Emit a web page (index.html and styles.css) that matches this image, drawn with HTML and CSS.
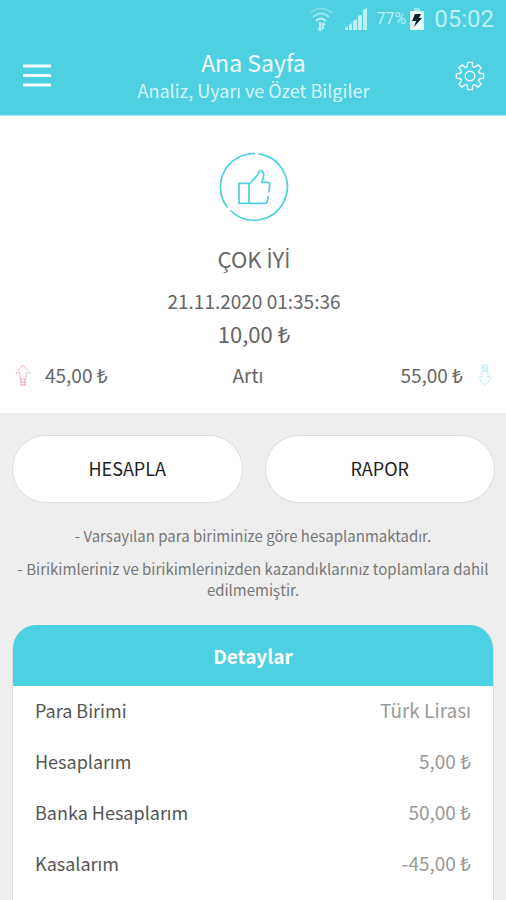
FILE: index.html
```html
<!DOCTYPE html>
<html lang="tr">
<head>
<meta charset="utf-8">
<meta name="viewport" content="width=device-width, initial-scale=1">
<title>Ana Sayfa</title>
<link rel="stylesheet" href="styles.css">
</head>
<body>
<header class="top">
  <div class="status">
    <svg class="wifi" viewBox="0 0 24 26" width="24" height="26" aria-hidden="true">
      <g fill="none" stroke="currentColor" stroke-width="2">
        <path d="M1 7Q12-2 23 7" opacity=".4"/>
        <path d="M4 11Q12 4 20 11" opacity=".7"/>
        <path d="M7 15Q12 10 17 15"/>
      </g>
      <path d="M10 16h2v6h2l-3 4-3-4h2zM13 23v-4h-1l2-3 3 3h-2v4z" fill="currentColor"/>
    </svg>
    <svg class="signal" viewBox="0 0 22 22" width="22" height="22" aria-hidden="true">
      <path d="M0 22v-2l3-2v4zM4 22v-5l3-2v7zM8 22v-9l4-2v11zM13 22V8l4-2v16zM18 22V2l4-2v22z" fill="currentColor"/>
    </svg>
    <span class="battery-text">77%</span>
    <svg class="battery" viewBox="0 0 14 22" width="14" height="22" aria-hidden="true">
      <path d="M4 0h6v3H4z" fill="currentColor" opacity=".5"/>
      <path d="M0 3h14v19H0z" fill="currentColor"/>
      <path d="M5 6h6l-2 4h3L4 19l2-6H2z" fill="#123"/>
    </svg>
    <span class="clock">05:02</span>
  </div>
  <div class="bar">
    <button class="icon-button" type="button" aria-label="Menü">
      <svg viewBox="0 0 28 28" width="28" height="28"><path d="M0 4h28M0 13.500h28M0 23h28" stroke="currentColor" stroke-width="3"/></svg>
    </button>
    <div class="titles">
      <h1>Ana Sayfa</h1>
      <p>Analiz, Uyarı ve Özet Bilgiler</p>
    </div>
    <button class="icon-button" type="button" aria-label="Ayarlar">
      <svg viewBox="-15 -15 30 30" width="30" height="30" fill="none" stroke="currentColor" stroke-width="1.400" stroke-linejoin="round">
        <path d="M-2.800-9.500L-2.200-13.600H2.200L2.800-9.500Q4 -8.200 5.200-8.800L8-11.200 11.200-8 8.800-5.200Q8.200-4 9.500-2.800L13.600-2.200V2.200L9.500 2.800Q8.200 4 8.800 5.200L11.200 8 8 11.200 5.200 8.800Q4 8.200 2.800 9.500L2.200 13.600H-2.200L-2.800 9.500Q-4 8.200-5.200 8.800L-8 11.200-11.200 8-8.800 5.200Q-8.200 4-9.500 2.800L-13.600 2.200V-2.200L-9.500-2.800Q-8.200-4-8.800-5.200L-11.200-8-8-11.200-5.200-8.800Q-4-8.200-2.800-9.500z"/>
        <circle r="4.800"/>
      </svg>
    </button>
  </div>
</header>
<main>
  <section class="summary">
    <svg class="thumb" viewBox="0 0 70 70" width="70" height="70" fill="none" stroke="currentColor" stroke-width="1.700" stroke-linejoin="round" aria-hidden="true">
      <path d="M39.500 1.900A33.300 33.300 0 1 1 11.500 58.500M8.500 55.500A33.300 33.300 0 0 1 36 1.700"/>
      <path d="M20 31.300H30V51.300H20zM30 32.500L38 23.500Q39 22 40 19.800Q41.500 17.500 43.500 19.300Q45.300 21 44.500 24.500L43 30.300H48.500Q51 30.500 50.700 33L50 40.300M49 44L48.500 48.500Q48.200 51.300 45.700 51.300H30"/>
    </svg>
    <h2>ÇOK <span class="dotted">İ</span>Y<span class="dotted">İ</span></h2>
    <p class="date">21.11.2020 01:35:36</p>
    <p class="total">10,00 ₺</p>
    <div class="flow">
      <span class="amount">
        <svg class="up" viewBox="0 0 16 22" width="16" height="22" fill="none" stroke="currentColor" aria-hidden="true"><path d="M5 14V9H1L8 1l7 8h-4v5" stroke-dasharray="3 1"/><path d="M5 15h6M5 18h6M5 21h6M6 15v6M10 15v6"/></svg>
        45,00 ₺
      </span>
      <span class="state">Artı</span>
      <span class="amount end">
        55,00 ₺
        <svg class="down" viewBox="0 0 16 22" width="16" height="22" fill="none" stroke="currentColor" aria-hidden="true"><path d="M5 8v5H1l7 8 7-8h-4V8" stroke-dasharray="3 1"/><path d="M5 7h6M5 4h6M6 1h4M6 1v6M10 1v6"/></svg>
      </span>
    </div>
  </section>
  <div class="actions">
    <button type="button">HESAPLA</button>
    <button type="button">RAPOR</button>
  </div>
  <div class="notes">
    <p>- Varsayılan para biriminize göre hesaplanmaktadır.</p>
    <p>- Birikimleriniz ve birikimlerinizden kazandıklarınız toplamlara dahil edilmemiştir.</p>
  </div>
  <section class="card">
    <h2>Detaylar</h2>
    <table>
      <tbody>
        <tr><th scope="row">Para Birimi</th><td>Türk Lirası</td></tr>
        <tr><th scope="row">Hesaplarım</th><td>5,00 ₺</td></tr>
        <tr><th scope="row">Banka Hesaplarım</th><td>50,00 ₺</td></tr>
        <tr><th scope="row">Kasalarım</th><td>-45,00 ₺</td></tr>
      </tbody>
    </table>
  </section>
</main>
</body>
</html>
```
FILE: styles.css
```css
* { box-sizing: border-box; }
body {
  margin: 0;
  background: #eee;
  color: #666;
  font-family: "Noto Sans CJK SC", "Noto Sans", sans-serif;
  font-size: 18px;
  line-height: 24px;
}
h1, h2, p { margin: 0; font-weight: 400; }
button { font: inherit; cursor: pointer; }
svg { display: block; flex: none; }

.top {
  background: #4dd0e2;
  color: #f2fdff;
  border-bottom: 1px solid #a6e7f0;
}
.status {
  display: flex;
  align-items: center;
  justify-content: flex-end;
  height: 38px;
  padding-right: 12px;
  color: #bdeff5;
  font-family: Roboto, sans-serif;
}
.signal { margin-left: 12px; }
.battery-text { margin-left: 10px; font-size: 16px; }
.battery { margin-left: 4px; color: #e2fafc; }
.clock { margin-left: 10px; font-size: 24px; }
.bar {
  display: flex;
  align-items: center;
  justify-content: space-between;
  height: 77px;
  padding: 0 20px 2px 21px;
}
.icon-button {
  display: flex;
  align-items: center;
  justify-content: center;
  width: 32px;
  height: 32px;
  padding: 0;
  border: 0;
  background: none;
  color: inherit;
}
.titles { padding-bottom: 3px; text-align: center; }
.titles h1 { font-size: 23px; line-height: 32px; }
.titles p { font-size: 18px; color: #d8f7fb; }

.summary {
  display: flex;
  flex-direction: column;
  align-items: center;
  padding: 36px 13px 24px 15px;
  background: #fff;
}
.thumb { color: #4dd0e2; }
.summary h2 { margin-top: 20px; font-size: 22px; line-height: 32px; }
.dotted { font-family: "Open Sans", sans-serif; }
.date { margin-top: 14px; font-size: 19px; }
.total { margin-top: 4px; font-size: 22px; line-height: 32px; }
.flow {
  display: grid;
  grid-template-columns: 1fr auto 1fr;
  align-items: center;
  width: 100%;
  margin-top: 14px;
  padding-bottom: 2px;
  font-size: 19px;
}
.state { margin-right: 12px; }
.amount { display: flex; align-items: center; gap: 14px; }
.end { justify-content: flex-end; }
.up { color: #f2a0ba; }
.down { color: #a5e9ef; }

.actions {
  display: flex;
  gap: 22px;
  padding: 22px 11px 22px 12px;
}
.actions button {
  flex: 1;
  height: 68px;
  padding: 0 0 2px;
  border: 1px solid #ddd;
  border-radius: 34px;
  background: #fff;
  color: #222;
  font-size: 18px;
}
.notes {
  display: flex;
  flex-direction: column;
  gap: 12px;
  padding: 0 12px;
  color: #777;
  font-size: 15px;
  line-height: 21px;
  text-align: center;
}
.card {
  margin: 25px 12px 0;
  padding-bottom: 24px;
  border: 1px solid #ddd;
  border-top: 0;
  border-radius: 24px 24px 0 0;
  overflow: hidden;
  background: #fff;
}
.card h2 {
  background: #4dd0e2;
  color: #fff;
  font-size: 19px;
  font-weight: 700;
  line-height: 61px;
  text-align: center;
}
.card table { width: 100%; border-collapse: collapse; }
.card th, .card td { height: 51px; padding: 0 22px 4px; font-weight: 400; }
.card th { color: #555; text-align: left; }
.card td { color: #999; font-size: 19px; text-align: right; }
```
